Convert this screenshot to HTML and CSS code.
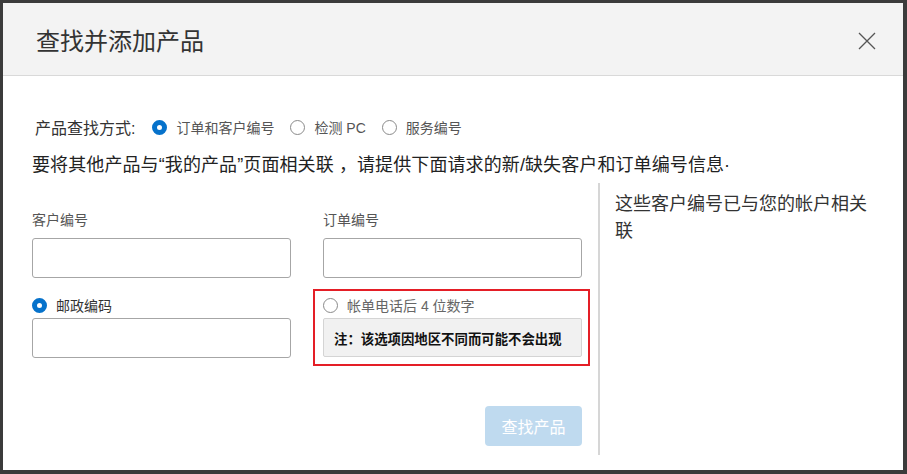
FILE: index.html
```html
<!DOCTYPE html>
<html lang="zh-CN">
<head>
<meta charset="utf-8">
<title>查找并添加产品</title>
<link rel="stylesheet" href="styles.css">
</head>
<body>
<div class="modal">
  <div class="modal-header">
    <h1 class="modal-title">查找并添加产品</h1>
    <button class="close-btn" aria-label="关闭">
      <svg width="18" height="18" viewBox="0 0 18 18"><path d="M1 1 L17 17 M17 1 L1 17" stroke="#555" stroke-width="1.3" fill="none"/></svg>
    </button>
  </div>
  <div class="modal-body">
    <div class="method-row">
      <span class="method-label">产品查找方式:</span>
      <span class="radio checked"></span><span class="opt">订单和客户编号</span>
      <span class="radio"></span><span class="opt">检测 PC</span>
      <span class="radio"></span><span class="opt">服务编号</span>
    </div>
    <p class="intro">要将其他产品与“我的产品”页面相关联 ，请提供下面请求的新/缺失客户和订单编号信息·</p>
    <div class="columns">
      <div class="left-col">
        <div class="grid">
          <div class="cell">
            <div class="field-label">客户编号</div>
            <div class="input"></div>
          </div>
          <div class="cell">
            <div class="field-label">订单编号</div>
            <div class="input"></div>
          </div>
          <div class="cell cell-zip">
            <div class="radio-label"><span class="radio checked"></span><span class="zip-text">邮政编码</span></div>
            <div class="input"></div>
          </div>
          <div class="cell highlight">
            <div class="radio-label"><span class="radio"></span><span class="phone-text">帐单电话后 4 位数字</span></div>
            <div class="note">注：该选项因地区不同而可能不会出现</div>
          </div>
        </div>
        <div class="actions">
          <button class="find-btn">查找产品</button>
        </div>
      </div>
      <div class="divider"></div>
      <div class="right-col">这些客户编号已与您的帐户相关联</div>
    </div>
  </div>
</div>
</body>
</html>
```

FILE: styles.css
```css
* { box-sizing: border-box; }
html, body { margin: 0; padding: 0; }
body {
  width: 907px;
  height: 474px;
  background: #3b3b3b;
  font-family: "Liberation Sans", "Noto Sans CJK SC", sans-serif;
  overflow: hidden;
  padding: 3px 0 0 3px;
}
.modal {
  width: 900px;
  height: 467px;
  background: #fff;
  display: flex;
  flex-direction: column;
}
.modal-header {
  height: 73px;
  background: #f3f3f3;
  border-bottom: 1px solid #d9d9d9;
  display: flex;
  align-items: center;
  justify-content: space-between;
  padding: 2px 27px 0 33px;
}
.modal-title {
  margin: 0;
  font-size: 24px;
  font-weight: normal;
  color: #333;
  line-height: 30px;
  padding-top: 3px;
}
.close-btn {
  background: none;
  border: none;
  padding: 0;
  width: 18px;
  height: 18px;
  display: flex;
  margin-top: 2px;
}
.modal-body {
  padding: 41px 0 0 29px;
}
.method-row {
  display: flex;
  align-items: center;
  height: 20px;
  padding-left: 3px;
}
.method-label {
  font-size: 16px;
  color: #333;
  margin-right: 17px;
}
.opt {
  font-size: 14px;
  color: #555;
  margin-left: 9px;
  margin-right: 16px;
}
.radio {
  display: inline-block;
  width: 15px;
  height: 15px;
  border-radius: 50%;
  border: 1px solid #8a8a8a;
  background: #fff;
  flex: none;
}
.radio.checked {
  border: 5px solid #0672cb;
}
.intro {
  margin: 15px 0 0 0;
  font-size: 18px;
  line-height: 26px;
  color: #222;
  letter-spacing: 0.1px;
}
.columns {
  display: flex;
  margin-top: 5px;
  height: 272px;
}
.left-col {
  width: 550px;
  padding-top: 27px;
  margin-right: 16px;
}
.grid {
  display: grid;
  grid-template-columns: 259px 259px;
  column-gap: 32px;
  row-gap: 11px;
}
.field-label {
  font-size: 14px;
  color: #555;
  line-height: 20px;
  margin-bottom: 8px;
}
.input {
  height: 40px;
  border: 1px solid #a6a6a6;
  border-radius: 3px;
  background: #fff;
}
.cell-zip {
  padding-top: 6px;
}
.radio-label {
  display: flex;
  align-items: center;
  height: 20px;
  margin-bottom: 3px;
}
.zip-text {
  font-size: 14px;
  color: #333;
  margin-left: 9px;
}
.phone-text {
  font-size: 14px;
  color: #666;
  margin-left: 9px;
}
.highlight {
  margin: 0 -8px 0 -10px;
  border: 2px solid #e41e26;
  padding: 4px 6px 7px 8px;
}
.note {
  height: 39px;
  background: #f1f1f1;
  border: 1px solid #d4d4d4;
  border-radius: 2px;
  font-size: 13.4px;
  font-weight: bold;
  color: #111;
  display: flex;
  align-items: center;
  padding-left: 10px;
}
.actions {
  display: flex;
  justify-content: flex-end;
  margin-top: 40px;
}
.find-btn {
  width: 97px;
  height: 40px;
  border: none;
  border-radius: 4px;
  background: #bfdaef;
  color: #fff;
  font-family: "Liberation Sans", "Noto Sans CJK SC", sans-serif;
  font-size: 16px;
  padding: 0;
}
.divider {
  width: 2px;
  background: #d6d6d6;
  height: 272px;
}
.right-col {
  width: 276px;
  padding-left: 15px;
  padding-top: 8px;
  font-size: 18px;
  line-height: 27px;
  color: #333;
}
```
